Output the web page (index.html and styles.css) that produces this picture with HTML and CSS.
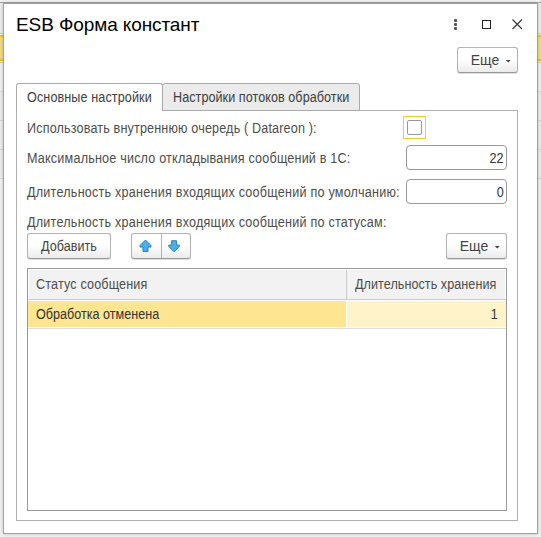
FILE: index.html
```html
<!DOCTYPE html>
<html lang="ru">
<head>
<meta charset="utf-8">
<title>ESB Форма констант</title>
<link rel="stylesheet" href="styles.css">
</head>
<body>
<main class="window">
  <header class="titlebar">
    <h1>ESB Форма констант</h1>
    <svg class="controls" width="70" height="14" viewBox="0 0 70 14">
      <g fill="#555"><rect x="1" y="1" width="3" height="3" rx="1"/><rect x="1" y="5" width="3" height="3" rx="1"/><rect x="1" y="9" width="3" height="3" rx="1"/></g>
      <rect x="29.5" y="2.5" width="8" height="8" fill="none" stroke="#222"/>
      <path d="M59.5 1.500l9.500 9.500m0-9.500l-9.500 9.500" fill="none" stroke="#333" stroke-width="1.1"/>
    </svg>
  </header>
  <div class="commands"><button class="btn more"><span>Еще</span><i class="caret"></i></button></div>
  <nav class="tabs">
    <div class="tab active"><span class="text t1">Основные настройки</span></div>
    <div class="tab second"><span class="text t2">Настройки потоков обработки</span></div>
  </nav>
  <section class="panel">
    <div class="field f1"><label class="text l1">Использовать внутреннюю очередь ( Datareon ):</label><span class="focus"><span class="check"></span></span></div>
    <div class="field f2"><label class="text l2">Максимальное число откладывания сообщений в 1С:</label><span class="input"><span class="text value">22</span></span></div>
    <div class="field f3"><label class="text l3">Длительность хранения входящих сообщений по умолчанию:</label><span class="input"><span class="text value">0</span></span></div>
    <div class="field f4"><label class="text l3">Длительность хранения входящих сообщений по статусам:</label></div>
    <div class="toolbar">
      <button class="btn add"><span class="text">Добавить</span></button>
      <div class="btn arrows">
        <svg width="29" height="24" viewBox="0 0 29 24"><path d="M13.500 6L19 11.500V13h-3v4.500h-5V13H8v-1.500z" fill="#44b1ed" stroke="#2e81b2"/></svg>
        <svg class="down" width="29" height="24" viewBox="0 0 29 24"><path d="M12.500 18L18 12.500V11h-3V6.500h-5V11H7v1.500z" fill="#44b1ed" stroke="#2e81b2"/></svg>
      </div>
      <button class="btn more"><span>Еще</span><i class="caret"></i></button>
    </div>
    <div class="table">
      <div class="row head"><div class="cell"><span class="text l1">Статус сообщения</span></div><div class="cell"><span class="text t2">Длительность хранения</span></div></div>
      <div class="row selected"><div class="cell"><span class="text">Обработка отменена</span></div><div class="cell num"><span class="text value">1</span></div></div>
    </div>
  </section>
</main>
</body>
</html>
```
FILE: styles.css
```css
* { box-sizing: border-box; }
body {
  margin: 0; width: 541px; height: 537px; padding: 3px; overflow: hidden;
  font: 14px/16px "Liberation Sans", Arial, sans-serif; color: #4d4d4d;
  background: linear-gradient(#f2f2f2 0 2px, #a5a5a5 2px 3px, #eee 3px 33px, #ccc 33px 34px, #f2f2f2 34px 35px, #f2c322 35px 37px, #f4dc88 37px 59px, #f2c322 59px 61px, #f2f2f2 61px 62px, #ccc 62px 63px, #f2f2f2 63px 91px, #ddd 91px 92px, #eee 92px 120px, #d5d5d5 120px 121px, #eee 121px 149px, #d5d5d5 149px 150px, #eee 150px 178px, #d5d5d5 178px 179px, #f2f2f2 179px);
}
span { white-space: nowrap; }
.text { display: inline-block; transform: scaleX(.9); transform-origin: left; }
.t1 { letter-spacing: .12px; }
.t2 { letter-spacing: .06px; }
.l1 { letter-spacing: .17px; }
.l2 { letter-spacing: .21px; }
.l3 { letter-spacing: .25px; }
.value { transform-origin: right; }
.window { width: 535px; height: 531px; padding: 0 19px 0 12px; border: 1px solid #a0a0a0; background: #fff; box-shadow: 0 0 4px rgba(0,0,0,.2); }
.titlebar { height: 43px; display: flex; justify-content: space-between; padding-top: 10px; margin-right: -5px; }
h1 { margin: 0; font-size: 19px; line-height: 22px; font-weight: 400; color: #000; letter-spacing: -.1px; }
.controls { margin-top: 4px; margin-right: 0; }
.commands { display: flex; justify-content: flex-end; height: 36px; }
.btn { height: 26px; display: flex; align-items: center; justify-content: center; padding: 0; border: 1px solid #b3b3b3; border-bottom-color: #999; border-radius: 3px; background: linear-gradient(#fff 45%, #ebebeb); font: inherit; color: #444; box-shadow: 0 1px 0 #ddd; }
.more { width: 61px; padding-left: 7px; gap: 6px; }
.caret { width: 6px; height: 3px; background: #444; clip-path: polygon(0 0,100% 0,50% 100%); margin-top: 2px; }
.tabs { height: 27px; display: flex; }
.tab { height: 28px; padding: 5px 10px 0; border: 1px solid #aaa; border-radius: 3px 3px 0 0; white-space: nowrap; color: #404040; }
.active { width: 147px; border-bottom: 0; background: #fff; z-index: 1; }
.second { width: 198px; margin-left: -1px; background: #ebebeb; }
.panel { width: 502px; height: 411px; border: 1px solid #b0b0b0; padding: 5px 10px 9px; }
.field { display: flex; justify-content: space-between; align-items: center; white-space: nowrap; }
.field label { width: 370px; }
.f1 { height: 23px; }
.f2 { height: 25px; margin-top: 6px; }
.f3 { height: 25px; margin-top: 9px; }
.f4 { height: 16px; margin-top: 10px; }
.focus { width: 23px; height: 23px; border: 1px solid #f5cb2b; padding: 3px; margin-right: 81px; }
.check { display: block; width: 15px; height: 15px; border: 1px solid #999; border-radius: 2px; }
.input { width: 101px; height: 25px; padding: 4px 2px; border: 1px solid #999; border-radius: 4px; text-align: right; color: #333; }
.toolbar { display: flex; margin-top: 3px; height: 35px; }
.add { width: 84px; margin-right: 20px; }
.add .text { transform-origin: center; }
.arrows { width: 60px; }
.arrows .down { border-left: 1px solid #b3b3b3; }
.toolbar .more { margin-left: auto; }
.table { height: 243px; border: 1px solid #999; }
.row { display: grid; grid-template-columns: 318px 1fr; }
.head { height: 31px; grid-template-columns: 317px 1fr; border: 1px solid #fff; border-bottom: 1px solid #ccc; background: #f2f2f2; }
.cell { white-space: nowrap; min-width: 0; }
.head .cell { padding: 6px 0 0 7px; }
.head .cell + .cell { border-left: 1px solid #ccc; padding-left: 8px; }
.selected { height: 29px; border-top: 1px solid #fff; border-bottom: 1px solid #ddd; color: #333; }
.selected .cell { padding: 5px 8px 0; margin-bottom: 1px; background: #fee591; }
.selected .num { margin-left: 1px; background: #fff3c9; text-align: right; }
```
